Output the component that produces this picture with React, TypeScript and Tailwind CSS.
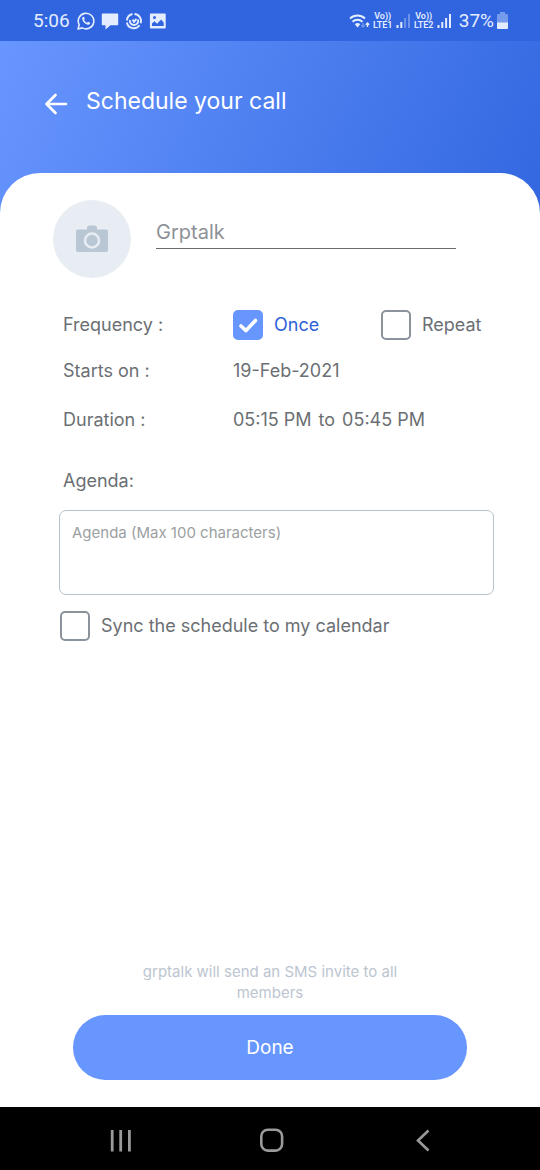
import React, { useState } from "react";

type CheckboxProps = {
  id: string;
  label: string;
  checked: boolean;
  onChange: () => void;
};

function Checkbox({ id, label, checked, onChange }: CheckboxProps) {
  return (
    <div className="flex items-center gap-[11px]">
      <span className="relative flex h-[30px] w-[30px] shrink-0">
        <input
          id={id}
          type="checkbox"
          checked={checked}
          onChange={onChange}
          className="h-full w-full appearance-none rounded-[5px] border-2 border-[#8a939c] bg-white checked:border-[#6896ff] checked:bg-[#6896ff]"
        />
        {checked && (
          <svg
            className="pointer-events-none absolute inset-0 h-full w-full"
            viewBox="0 0 30 30"
            fill="none"
            stroke="white"
            strokeWidth="3.6"
            strokeLinecap="round"
            strokeLinejoin="round"
            aria-hidden="true"
          >
            <path d="M8 16l5 4.600L22.500 10.500" />
          </svg>
        )}
      </span>
      <label
        htmlFor={id}
        className={checked ? "text-[#2f62d8]" : "text-[#6b6f73]"}
      >
        {label}
      </label>
    </div>
  );
}

function Signal({ bars }: { bars: number }) {
  return (
    <svg className="h-[15px] w-[15px]" viewBox="0 0 15 15" fill="currentColor" aria-hidden="true">
      <rect x="0.500" y="12" width="2" height="3" />
      <rect x="4.300" y="9" width="2" height="6" />
      <rect x="8.100" y="5" width="2" height="10" opacity={bars > 2 ? 1 : 0.35} />
      <rect x="12" y="1" width="2" height="14" opacity={bars > 3 ? 1 : 0.35} />
    </svg>
  );
}

function Volte({ line }: { line: string }) {
  return (
    <span className="flex w-5 flex-col items-center text-[9px] font-semibold leading-[9px]">
      <span>Vo))</span>
      <span>{line}</span>
    </span>
  );
}

function StatusBar() {
  return (
    <div className="flex h-[41px] items-center justify-between bg-[#3065df] pl-[33px] pr-8 font-['Roboto',sans-serif] text-[#e4edff]">
      <div className="flex items-center gap-[6px]">
        <span className="mr-px text-[19px] leading-6">5:06</span>
        <svg className="h-[18px] w-[18px]" viewBox="0 0 18 18" fill="none" aria-hidden="true">
          <path
            d="M1 17l1.200-4.200A7.800 7.800 0 1 1 5.300 15.900z"
            stroke="currentColor"
            strokeWidth="1.6"
            strokeLinejoin="round"
          />
          <path
            d="M6.400 4.800c-.9.300-1.500 1.300-1.200 2.500.7 2.700 2.900 4.900 5.600 5.500 1.100.200 2.200-.5 2.400-1.500l-.1-.6-2-1-1 1.100c-1.400-.5-2.600-1.700-3.100-3l.9-.9-.9-2z"
            fill="currentColor"
          />
        </svg>
        <svg className="h-[18px] w-[18px]" viewBox="0 0 18 18" fill="currentColor" aria-hidden="true">
          <path d="M1.500 1.500h15a.7.7 0 0 1 .7.7v10.300a.7.7 0 0 1-.7.7H9.500L4.500 17.500v-4.300h-3a.7.7 0 0 1-.7-.7V2.200a.7.7 0 0 1 .7-.7z" />
        </svg>
        <svg
          className="h-[18px] w-[18px]"
          viewBox="0 0 18 18"
          fill="none"
          stroke="currentColor"
          strokeWidth="1.900"
          aria-hidden="true"
        >
          <path d="M7.500 2A7 7 0 0 0 2 8.500M1.900 10.500A7 7 0 0 0 14.500 13.300M15.600 11.200A7 7 0 0 0 9.500 2" />
          <path d="M4.900 8a4.200 4.200 0 1 0 8.100-.5M7.500 7.500l1.500 2.300 2.500-3" />
        </svg>
        <svg className="h-[18px] w-[18px]" viewBox="0 0 18 18" aria-hidden="true">
          <path
            fill="currentColor"
            fillRule="evenodd"
            d="M1.700 1.500h14.200a.8.8 0 0 1 .8.8v13.400a.8.8 0 0 1-.8.8H1.700a.8.8 0 0 1-.8-.8V2.300a.8.8 0 0 1 .8-.8zM3 14h11.700v-3.500l-2.600-3-4 4.200L5.500 9.300 3 11.500zM5.500 4a1.500 1.500 0 1 0 0 3 1.500 1.500 0 0 0 0-3z"
          />
        </svg>
      </div>
      <div className="flex items-center gap-[3px]">
        <svg className="h-[16px] w-[21px]" viewBox="0 0 21 16" fill="none" stroke="currentColor" aria-hidden="true">
          <path d="M1 5.500a11 11 0 0 1 15 0M3.500 8.700a7.300 7.300 0 0 1 10 0" strokeWidth="1.900" />
          <path d="M5.800 11.300a4 4 0 0 1 5.500 0L8.500 14.500z" fill="currentColor" stroke="none" />
          <path d="M14 10v4m-1.600-1.600l1.600 1.600 1.600-1.600" strokeWidth="1.300" opacity="0.4" />
          <path d="M18.500 14v-4m-1.700 1.700l1.700-1.700 1.700 1.700" strokeWidth="1.500" />
        </svg>
        <Volte line="LTE1" />
        <Signal bars={2} />
        <Volte line="LTE2" />
        <Signal bars={4} />
        <span className="ml-1 text-[19px] leading-6">37%</span>
        <svg className="h-[17px] w-[11px]" viewBox="0 0 11 17" fill="currentColor" aria-hidden="true">
          <path d="M3 0h5v2h2a1 1 0 0 1 1 1v8H0V3a1 1 0 0 1 1-1h2z" opacity="0.4" />
          <path d="M0 10.500h11V16a1 1 0 0 1-1 1H1a1 1 0 0 1-1-1z" />
        </svg>
      </div>
    </div>
  );
}

function NavigationBar() {
  return (
    <nav className="flex h-[63px] items-center justify-between bg-black pl-[107px] pr-[103px] pt-1 text-[#9a9a9a]">
      <button type="button" aria-label="Recent apps">
        <svg className="h-7 w-7" viewBox="0 0 28 28" stroke="currentColor" strokeWidth="2.800" fill="none">
          <path d="M5.200 3v21.500M13.700 3v21.500M22.400 3v21.500" />
        </svg>
      </button>
      <button type="button" aria-label="Home">
        <svg className="h-7 w-7" viewBox="0 0 28 28" stroke="currentColor" strokeWidth="2.600" fill="none">
          <rect x="3.300" y="2.800" width="20.800" height="20.800" rx="6.500" />
        </svg>
      </button>
      <button type="button" aria-label="Back">
        <svg className="h-7 w-7" viewBox="0 0 28 28" stroke="currentColor" strokeWidth="2.600" fill="none">
          <path d="M19.500 3.500L9 13.500 19.500 23.500" />
        </svg>
      </button>
    </nav>
  );
}

function App() {
  const [repeat, setRepeat] = useState(false);
  const [sync, setSync] = useState(false);
  const [name, setName] = useState("");
  const [agenda, setAgenda] = useState("");

  return (
    <div className="flex min-h-screen flex-col font-['Inter',sans-serif] text-[18px] leading-6 text-[#6b6f73]">
      <StatusBar />
      <div className="flex flex-1 flex-col bg-[#3267e0] bg-[linear-gradient(113deg,#6896ff,#3267e0)] bg-[length:100%_180px] bg-no-repeat">
        <header className="flex h-[132px] items-start gap-[18px] px-11 pt-[46px] text-white">
          <button type="button" aria-label="Go back" className="mt-1">
            <svg
              className="h-6 w-6"
              viewBox="0 0 24 24"
              fill="none"
              stroke="currentColor"
              strokeWidth="2.700"
              strokeLinecap="round"
              strokeLinejoin="round"
            >
              <path d="M22 13H2.500M11.500 4L2.500 13l9 9" />
            </svg>
          </button>
          <h1 className="text-[23px] leading-7">Schedule your call</h1>
        </header>

        <main className="flex flex-1 flex-col rounded-t-[40px] bg-white pt-[27px] pb-[27px]">
          <div className="flex gap-[25px] pl-[53px] pr-[84px]">
            <button
              type="button"
              aria-label="Add photo"
              className="flex h-[78px] w-[78px] shrink-0 items-center justify-center rounded-full bg-[#e8edf4]"
            >
              <svg className="h-7 w-8" viewBox="0 0 32 28" aria-hidden="true">
                <path
                  d="M2 4.500h9V3a2.500 2.500 0 0 1 2.500-2.500h5A2.500 2.500 0 0 1 21 3v1.500h9a2 2 0 0 1 2 2V25a2 2 0 0 1-2 2H2a2 2 0 0 1-2-2V6.500a2 2 0 0 1 2-2z"
                  fill="#b9c6d3"
                />
                <circle cx="16" cy="15.500" r="7" fill="#b9c6d3" stroke="#e8edf4" strokeWidth="2.600" />
              </svg>
            </button>
            <input
              type="text"
              aria-label="Call name"
              placeholder="Grptalk"
              value={name}
              onChange={(e) => setName(e.target.value)}
              className="mt-4 h-[33px] min-w-0 flex-1 border-b border-[#6b6b6b] text-[20px] outline-none placeholder:text-[#8d9197]"
            />
          </div>

          <div className="mt-8 flex items-center pl-[63px]">
            <span className="w-[170px]">Frequency :</span>
            <div className="w-[148px]">
              <Checkbox id="once" label="Once" checked={!repeat} onChange={() => setRepeat(false)} />
            </div>
            <Checkbox id="repeat" label="Repeat" checked={repeat} onChange={() => setRepeat(true)} />
          </div>
          <div className="mt-[19px] flex pl-[63px]">
            <span className="w-[170px]">Starts on :</span>
            <span>19-Feb-2021</span>
          </div>
          <div className="mt-[25px] flex pl-[63px]">
            <span className="w-[170px]">Duration :</span>
            <span className="flex gap-[7px]">
              <span>05:15 PM</span>
              <span>to</span>
              <span>05:45 PM</span>
            </span>
          </div>

          <label htmlFor="agenda" className="mt-[37px] pl-[63px]">
            Agenda:
          </label>
          <div className="mt-[17px] flex pl-[59px] pr-[46px]">
            <textarea
              id="agenda"
              maxLength={100}
              placeholder="Agenda (Max 100 characters)"
              value={agenda}
              onChange={(e) => setAgenda(e.target.value)}
              className="h-[85px] w-full resize-none rounded-[7px] border border-[#b4c2cc] px-3 py-[10px] text-[15px] outline-none placeholder:text-[#9c9fa2]"
            />
          </div>
          <div className="mt-4 pl-[60px]">
            <Checkbox
              id="sync"
              label="Sync the schedule to my calendar"
              checked={sync}
              onChange={() => setSync(!sync)}
            />
          </div>

          <div className="mt-auto flex flex-col items-center px-[73px]">
            <p className="w-[290px] text-center text-[15px] leading-[21px] text-[#bcc5d0]">
              grptalk will send an SMS invite to all members
            </p>
            <button
              type="button"
              className="mt-3 h-[65px] w-full rounded-full bg-[#6896ff] text-[19px] text-white"
            >
              Done
            </button>
          </div>
        </main>
      </div>
      <NavigationBar />
    </div>
  );
}

export default App;
